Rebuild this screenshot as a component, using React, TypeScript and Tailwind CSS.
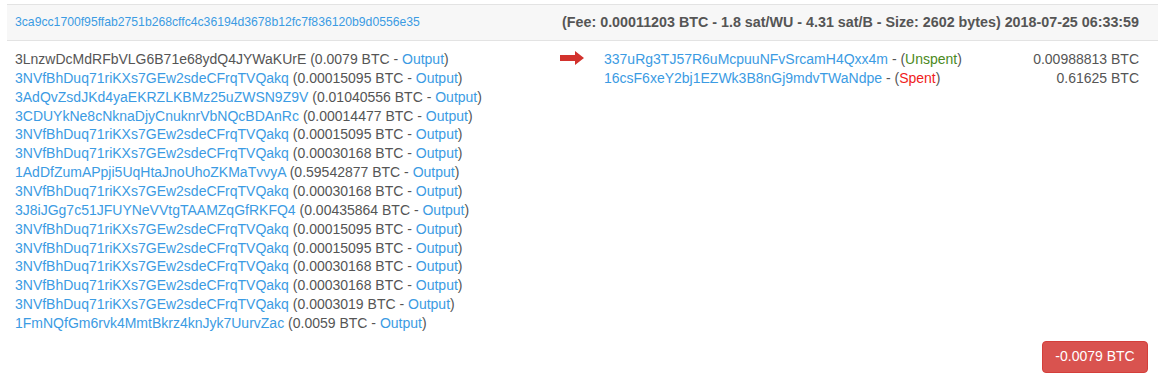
import React from "react";

const inputs: [string, string, boolean][] = [
  ["3LnzwDcMdRFbVLG6B71e68ydQ4JYWaKUrE", "0.0079", false],
  ["3NVfBhDuq71riKXs7GEw2sdeCFrqTVQakq", "0.00015095", true],
  ["3AdQvZsdJKd4yaEKRZLKBMz25uZWSN9Z9V", "0.01040556", true],
  ["3CDUYkNe8cNknaDjyCnuknrVbNQcBDAnRc", "0.00014477", true],
  ["3NVfBhDuq71riKXs7GEw2sdeCFrqTVQakq", "0.00015095", true],
  ["3NVfBhDuq71riKXs7GEw2sdeCFrqTVQakq", "0.00030168", true],
  ["1AdDfZumAPpji5UqHtaJnoUhoZKMaTvvyA", "0.59542877", true],
  ["3NVfBhDuq71riKXs7GEw2sdeCFrqTVQakq", "0.00030168", true],
  ["3J8iJGg7c51JFUYNeVVtgTAAMZqGfRKFQ4", "0.00435864", true],
  ["3NVfBhDuq71riKXs7GEw2sdeCFrqTVQakq", "0.00015095", true],
  ["3NVfBhDuq71riKXs7GEw2sdeCFrqTVQakq", "0.00015095", true],
  ["3NVfBhDuq71riKXs7GEw2sdeCFrqTVQakq", "0.00030168", true],
  ["3NVfBhDuq71riKXs7GEw2sdeCFrqTVQakq", "0.00030168", true],
  ["3NVfBhDuq71riKXs7GEw2sdeCFrqTVQakq", "0.0003019", true],
  ["1FmNQfGm6rvk4MmtBkrz4knJyk7UurvZac", "0.0059", true],
];

export default function App() {
  return (
    <div
      className="w-[1158px] h-[388px] bg-white overflow-hidden text-[#555]"
      style={{ fontFamily: '"Liberation Sans", Arial, Helvetica, sans-serif' }}
    >
      <div className="ml-[7px] mt-[4px] border-t border-[#e3e3e3]">
        <div className="h-[36px] bg-[#f7f7f7] border-b border-[#e3e3e3] flex items-center justify-between pl-[8px] pr-[19px]">
          <span className="text-[12.2px] text-[#3b9be3]">
            3ca9cc1700f95ffab2751b268cffc4c36194d3678b12fc7f836120b9d0556e35
          </span>
          <span className="text-[14.3px] font-bold text-[#555]">
            (Fee: 0.00011203 BTC - 1.8 sat/WU - 4.31 sat/B - Size: 2602 bytes) 2018-07-25 06:33:59
          </span>
        </div>
        <div className="flex pt-[9px] text-[14px] leading-[18.86px]">
          <div className="w-[553px] pl-[8px]">
            {inputs.map(([addr, amt, link], i) => (
              <div key={i} className="whitespace-nowrap">
                <span className={link ? "text-[#3b9be3]" : "text-[#555]"}>{addr}</span>{" "}
                ({amt} BTC - <span className="text-[#3b9be3]">Output</span>)
              </div>
            ))}
          </div>
          <div className="flex-1 flex pr-[19px]">
            <div className="w-[44px] pt-[1px]">
              <svg width="24" height="14" viewBox="0 0 24 14">
                <polygon points="0,4 15,4 15,0 24,7 15,14 15,10 0,10" fill="#d2322d" />
              </svg>
            </div>
            <div className="flex-1">
              <div className="flex justify-between whitespace-nowrap">
                <span>
                  <span className="text-[#3b9be3]">337uRg3TJ57R6uMcpuuNFvSrcamH4Qxx4m</span> - (
                  <span className="text-[#4b8a1c]">Unspent</span>)
                </span>
                <span>0.00988813 BTC</span>
              </div>
              <div className="flex justify-between whitespace-nowrap">
                <span>
                  <span className="text-[#3b9be3]">16csF6xeY2bj1EZWk3B8nGj9mdvTWaNdpe</span> - (
                  <span className="text-[#f0211c]">Spent</span>)
                </span>
                <span>0.61625 BTC</span>
              </div>
            </div>
          </div>
        </div>
        <div className="flex justify-end pr-[10px] mt-[8px]">
          <span className="h-[32px] w-[106px] rounded-[4px] bg-[#d9534f] border border-[#d43f3a] text-white text-[14px] flex items-center justify-center">
            -0.0079 BTC
          </span>
        </div>
      </div>
    </div>
  );
}
